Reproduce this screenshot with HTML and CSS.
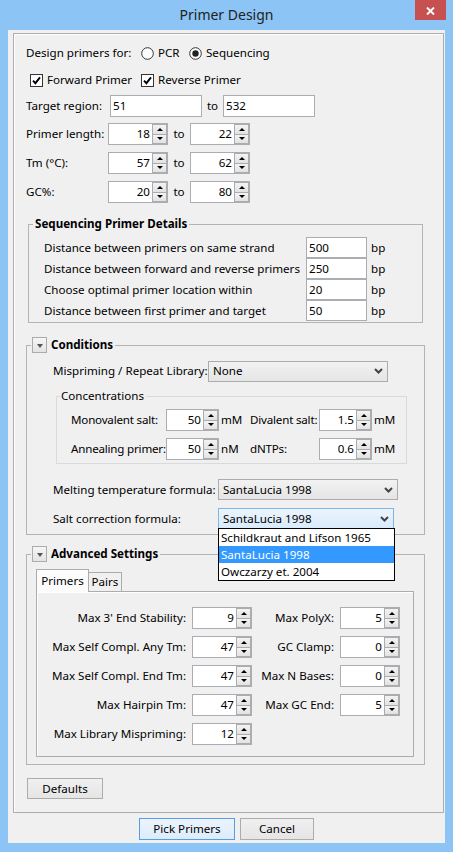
FILE: index.html
```
<!DOCTYPE html>
<html>
<head>
<meta charset="utf-8">
<title>Primer Design</title>
<link rel="stylesheet" href="styles.css">
</head>
<body>
<div class="window">
  <div class="titlebar">
    <div></div>
    <div class="title">Primer Design</div>
    <div class="close"><svg width="9" height="8" viewBox="0 0 9 8"><path d="M1 0.5 8 7.5M8 0.5 1 7.5" stroke="#fff" stroke-width="1.9" fill="none"/></svg></div>
  </div>
  <div class="client">
    <div class="main">
      <div class="row">
        <span class="w-design">Design primers for:</span>
        <svg class="radio" width="13" height="13" viewBox="0 0 13 13"><circle cx="6.5" cy="6.5" r="5.8" fill="#fff" stroke="#333"/></svg>
        <span class="rl w-pcr">PCR</span>
        <svg class="radio" width="13" height="13" viewBox="0 0 13 13"><circle cx="6.5" cy="6.5" r="5.8" fill="#fff" stroke="#333"/><circle cx="6.5" cy="6.5" r="3.2" fill="#222"/></svg>
        <span class="rl">Sequencing</span>
      </div>
      <div class="row checks">
        <svg class="chk" width="13" height="13" viewBox="0 0 13 13"><rect x="0.5" y="0.5" width="12" height="12" fill="#fff" stroke="#333"/><path d="M3 6.6 5.4 9.2 10 3.4" fill="none" stroke="#000" stroke-width="1.9"/></svg>
        <span class="cl w-fwd">Forward Primer</span>
        <svg class="chk" width="13" height="13" viewBox="0 0 13 13"><rect x="0.5" y="0.5" width="12" height="12" fill="#fff" stroke="#333"/><path d="M3 6.6 5.4 9.2 10 3.4" fill="none" stroke="#000" stroke-width="1.9"/></svg>
        <span class="cl">Reverse Primer</span>
      </div>
      <div class="row target">
        <span class="w-target">Target region:</span>
        <span class="edit w-region">51</span>
        <span class="to to-t">to</span>
        <span class="edit w-region">532</span>
      </div>
      <div class="row range r1">
        <span class="w-range">Primer length:</span>
        <span class="spin w60"><span class="val">18</span><span class="arrows"><i class="up"></i><i class="dn"></i></span></span>
        <span class="to">to</span>
        <span class="spin w60"><span class="val">22</span><span class="arrows"><i class="up"></i><i class="dn"></i></span></span>
      </div>
      <div class="row range">
        <span class="w-range">Tm (°C):</span>
        <span class="spin w60"><span class="val">57</span><span class="arrows"><i class="up"></i><i class="dn"></i></span></span>
        <span class="to">to</span>
        <span class="spin w60"><span class="val">62</span><span class="arrows"><i class="up"></i><i class="dn"></i></span></span>
      </div>
      <div class="row range">
        <span class="w-range">GC%:</span>
        <span class="spin w60"><span class="val">20</span><span class="arrows"><i class="up"></i><i class="dn"></i></span></span>
        <span class="to">to</span>
        <span class="spin w60"><span class="val">80</span><span class="arrows"><i class="up"></i><i class="dn"></i></span></span>
      </div>

      <fieldset class="group seq">
        <legend class="bold">Sequencing Primer Details</legend>
        <div class="seq-grid">
          <span>Distance between primers on same strand</span><span class="edit">500</span><span class="bp">bp</span>
          <span>Distance between forward and reverse primers</span><span class="edit">250</span><span class="bp">bp</span>
          <span>Choose optimal primer location within</span><span class="edit">20</span><span class="bp">bp</span>
          <span>Distance between first primer and target</span><span class="edit">50</span><span class="bp">bp</span>
        </div>
      </fieldset>

      <fieldset class="group cond">
        <legend><span class="lg"><span class="collapse"></span><span class="bold">Conditions</span></span></legend>
        <div class="cond-body">
          <div class="row">
            <span class="w-mis">Mispriming / Repeat Library:</span>
            <span class="combo w-none"><span>None</span><svg width="9" height="6" viewBox="0 0 9 6"><path d="M1 1 4.5 4.5 8 1" fill="none" stroke="#444" stroke-width="2"/></svg></span>
          </div>
          <fieldset class="group conc">
            <legend>Concentrations</legend>
            <div class="conc-grid">
              <span class="cl2">Monovalent salt:</span>
              <span class="spin"><span class="val">50</span><span class="arrows"><i class="up"></i><i class="dn"></i></span></span>
              <span class="unit">mM</span>
              <span class="cl2">Divalent salt:</span>
              <span class="spin"><span class="val">1.5</span><span class="arrows"><i class="up"></i><i class="dn"></i></span></span>
              <span class="unit">mM</span>
              <span class="cl2">Annealing primer:</span>
              <span class="spin"><span class="val">50</span><span class="arrows"><i class="up"></i><i class="dn"></i></span></span>
              <span class="unit">nM</span>
              <span class="cl2">dNTPs:</span>
              <span class="spin"><span class="val">0.6</span><span class="arrows"><i class="up"></i><i class="dn"></i></span></span>
              <span class="unit">mM</span>
            </div>
          </fieldset>
          <div class="row melt">
            <span class="w-formula">Melting temperature formula:</span>
            <span class="combo w-melt"><span>SantaLucia 1998</span><svg width="9" height="6" viewBox="0 0 9 6"><path d="M1 1 4.5 4.5 8 1" fill="none" stroke="#444" stroke-width="2"/></svg></span>
          </div>
          <div class="row salt">
            <span class="w-formula">Salt correction formula:</span>
            <span class="combo focus w-salt"><span>SantaLucia 1998</span><svg width="9" height="6" viewBox="0 0 9 6"><path d="M1 1 4.5 4.5 8 1" fill="none" stroke="#444" stroke-width="2"/></svg></span>
            <div class="dropdown">
              <div class="item">Schildkraut and Lifson 1965</div>
              <div class="item sel">SantaLucia 1998</div>
              <div class="item">Owczarzy et. 2004</div>
            </div>
          </div>
        </div>
      </fieldset>

      <fieldset class="group adv">
        <legend><span class="lg"><span class="collapse"></span><span class="bold">Advanced Settings</span></span></legend>
        <div class="adv-body">
          <div class="tabs">
            <span class="tab active">Primers</span>
            <span class="tab">Pairs</span>
          </div>
          <div class="tabpanel">
            <div class="adv-grid">
              <span class="lab">Max 3' End Stability:</span>
              <span class="spin w60"><span class="val">9</span><span class="arrows"><i class="up"></i><i class="dn"></i></span></span>
              <span class="lab">Max PolyX:</span>
              <span class="spin w60"><span class="val">5</span><span class="arrows"><i class="up"></i><i class="dn"></i></span></span>

              <span class="lab">Max Self Compl. Any Tm:</span>
              <span class="spin w60"><span class="val">47</span><span class="arrows"><i class="up"></i><i class="dn"></i></span></span>
              <span class="lab">GC Clamp:</span>
              <span class="spin w60"><span class="val">0</span><span class="arrows"><i class="up"></i><i class="dn"></i></span></span>

              <span class="lab">Max Self Compl. End Tm:</span>
              <span class="spin w60"><span class="val">47</span><span class="arrows"><i class="up"></i><i class="dn"></i></span></span>
              <span class="lab">Max N Bases:</span>
              <span class="spin w60"><span class="val">0</span><span class="arrows"><i class="up"></i><i class="dn"></i></span></span>

              <span class="lab">Max Hairpin Tm:</span>
              <span class="spin w60"><span class="val">47</span><span class="arrows"><i class="up"></i><i class="dn"></i></span></span>
              <span class="lab">Max GC End:</span>
              <span class="spin w60"><span class="val">5</span><span class="arrows"><i class="up"></i><i class="dn"></i></span></span>

              <span class="lab">Max Library Mispriming:</span>
              <span class="spin w60"><span class="val">12</span><span class="arrows"><i class="up"></i><i class="dn"></i></span></span>
            </div>
          </div>
        </div>
      </fieldset>

      <div class="btn defaults">Defaults</div>
    </div>
    <div class="btnrow">
      <div class="btn default w-pick">Pick Primers</div>
      <div class="btn w-cancel">Cancel</div>
    </div>
  </div>
</div>
</body>
</html>
```
FILE: styles.css
```
* { box-sizing: border-box; }
html, body { margin: 0; padding: 0; }
body {
  width: 453px;
  height: 852px;
  overflow: hidden;
  background: #8cc4f5;
  font-family: "Noto Sans", "DejaVu Sans", sans-serif;
  font-size: 11.6px;
  line-height: 16px;
  color: #000;
  white-space: nowrap;
}
.window { height: 852px; display: flex; flex-direction: column; }

.titlebar {
  height: 30px;
  display: grid;
  grid-template-columns: 1fr auto 1fr;
  align-items: start;
}
.title { font-size: 14px; line-height: 30px; color: #222; }
.close {
  justify-self: end;
  margin-right: 7px;
  width: 31px;
  height: 20px;
  background: #c75050;
  display: flex;
  align-items: center;
  justify-content: center;
  padding-top: 2px;
}

.client {
  margin: 0 8px;
  height: 813px;
  background: #f0f0f0;
  padding: 3px 0 0 5px;
}
.main {
  width: 431px;
  height: 780px;
  border: 1px solid #adadad;
  box-shadow: inset 1px 1px 0 #fff;
  padding: 8px 0 0 12px;
}

.row { display: flex; align-items: center; height: 22px; }
.bold { font-weight: bold; }

.w-design { width: 115px; }
.radio { flex: none; }
.rl { margin-left: 4px; }
.w-pcr { width: 31px; }

.checks { margin-top: 5px; padding-left: 4px; }
.chk { flex: none; }
.cl { margin-left: 4px; }
.w-fwd { width: 94px; }

.target { margin-top: 4px; }
.w-target { width: 84px; }
.edit {
  display: block;
  height: 22px;
  border: 1px solid #abadb3;
  background: #fff;
  padding: 0 2px;
  line-height: 20px;
}
.w-region { width: 92px; }
.to { width: 22px; text-align: center; }
.to-t { width: 21px; }

.range { margin-top: 7px; }
.range.r1 { margin-top: 6px; }
.w-range { width: 82px; }

.spin {
  display: flex;
  width: 53px;
  height: 22px;
  border: 1px solid #abadb3;
  background: #fff;
}
.spin.w60 { width: 60px; }
.val { flex: 1; text-align: right; padding-right: 2px; line-height: 20px; }
.arrows { width: 15px; display: flex; flex-direction: column; }
.arrows i {
  flex: 1;
  border: 1px solid #acacac;
  background: linear-gradient(#f3f3f3, #e2e2e2);
  display: flex;
  align-items: center;
  justify-content: center;
}
.arrows i.dn { border-top: none; }
.arrows i.up::after {
  content: "";
  border-left: 3px solid transparent;
  border-right: 3px solid transparent;
  border-bottom: 3px solid #000;
}
.arrows i.dn::after {
  content: "";
  border-left: 3px solid transparent;
  border-right: 3px solid transparent;
  border-top: 3px solid #000;
}

.group {
  margin: 0;
  padding: 0;
  min-width: 0;
  border: 1px solid #b4b4b4;
}
.group legend { padding: 0 2px; line-height: 16px; height: 16px; }

.group.seq { margin: 13px 0 0 2px; width: 395px; }
.seq legend { margin-left: 4px; }
.seq-grid {
  display: grid;
  grid-template-columns: 262px 61px auto;
  grid-auto-rows: 21px;
  align-items: center;
  padding: 5px 0 1px 15px;
}
.seq-grid .edit { height: 21px; line-height: 19px; }
.bp { padding-left: 4px; }

.lg { display: flex; align-items: center; height: 16px; }
.cond legend, .adv legend { margin-left: 4px; padding: 0 2px 0 1px; }
.collapse {
  width: 15px;
  height: 16px;
  border: 1px solid #acacac;
  background: linear-gradient(#f6f6f6, #e3e3e3);
  display: flex;
  align-items: center;
  justify-content: center;
  margin-right: 4px;
}
.collapse::after {
  content: "";
  border-left: 3px solid transparent;
  border-right: 3px solid transparent;
  border-top: 4px solid #555;
  margin-top: 1px;
}

.group.cond { margin-top: 14px; width: 399px; }
.cond-body { padding: 7px 0 5px 26px; }
.w-mis { width: 155px; }
.combo {
  height: 21px;
  border: 1px solid #acacac;
  background: linear-gradient(#f2f2f2, #e5e5e5);
  display: flex;
  align-items: center;
  justify-content: space-between;
  padding: 0 4px 0 4px;
}
.combo svg { flex: none; }
.w-none { width: 180px; }
.w-melt { width: 180px; }
.w-salt { width: 176px; }
.combo.focus { border-color: #7eb4ea; background: linear-gradient(#ecf4fc, #d9ebfb); }

.group.conc { margin: 6px 0 0 3px; width: 351px; border-color: #dadada; }
.conc legend { margin-left: 3px; }
.conc-grid {
  display: grid;
  grid-template-columns: 95px 53px 31px 69px 53px auto;
  grid-auto-rows: 22px;
  row-gap: 7px;
  align-items: center;
  padding: 5px 0 3px 14px;
}
.cl2 { letter-spacing: -0.2px; }
.unit { padding-left: 2px; }

.melt { margin-top: 15px; height: 21px; }
.salt { margin-top: 8px; height: 21px; position: relative; }
.w-formula { width: 165px; }
.dropdown {
  position: absolute;
  left: 165px;
  top: 20px;
  width: 177px;
  border: 1px solid #000;
  background: #fff;
  z-index: 5;
}
.item { height: 17px; line-height: 17px; padding-left: 2px; }
.item.sel { background: #3399ff; color: #fff; }

.group.adv { margin-top: 11px; width: 399px; }
.adv-body { padding: 7px 9px 7px 9px; }
.tabs { display: flex; align-items: flex-end; height: 23px; margin-bottom: -1px; position: relative; z-index: 1; }
.tab {
  height: 20px;
  width: 33px;
  border: 1px solid #acacac;
  border-left: none;
  background: #f0f0f0;
  text-align: center;
  line-height: 18px;
}
.tab.active {
  height: 23px;
  width: 53px;
  border-left: 1px solid #acacac;
  border-bottom: none;
  background: #fcfcfc;
  line-height: 21px;
}
.tabpanel {
  width: 378px;
  height: 166px;
  border: 1px solid #acacac;
  background: #f0f0f0;
  box-shadow: inset 1px 1px 0 #fff;
  padding: 15px 0 0 8px;
}
.adv-grid {
  display: grid;
  grid-template-columns: 141px 60px 76px 60px;
  column-gap: 6px;
  row-gap: 7px;
  grid-auto-rows: 22px;
  align-items: center;
}
.lab { justify-self: end; }

.btn {
  border: 1px solid #acacac;
  background: linear-gradient(#f0f0f0, #e5e5e5);
  display: flex;
  align-items: center;
  justify-content: center;
  height: 22px;
}
.defaults { margin: 13px 0 0 1px; width: 76px; height: 21px; }
.btnrow { display: flex; justify-content: center; gap: 5px; margin: 5px 0 0 -5px; }
.btn.default { border-color: #569de5; background: linear-gradient(#ecf4fc, #dcecfc); }
.w-pick { width: 96px; }
.w-cancel { width: 74px; }
```
